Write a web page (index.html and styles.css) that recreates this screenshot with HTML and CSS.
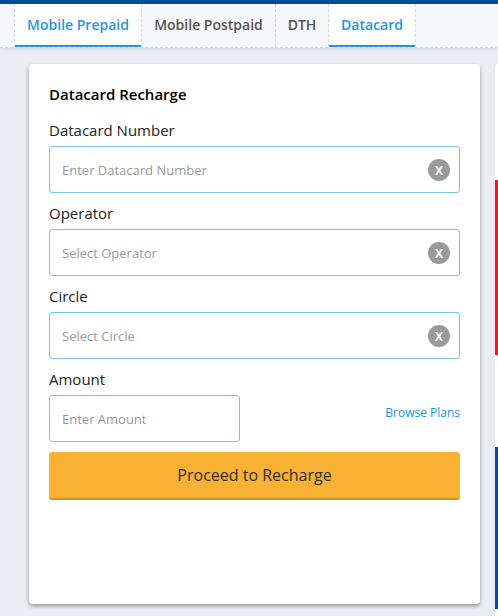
FILE: index.html
```html
<!DOCTYPE html>
<html lang="en">
<head>
<meta charset="utf-8">
<title>Datacard Recharge</title>
<link rel="stylesheet" href="styles.css">
</head>
<body>
<nav class="tabs">
  <a class="tab tab-prepaid active"><span>Mobile Prepaid</span></a>
  <a class="tab tab-postpaid"><span>Mobile Postpaid</span></a>
  <a class="tab tab-dth"><span>DTH</span></a>
  <a class="tab tab-datacard active"><span>Datacard</span></a>
</nav>
<main class="content">
  <form class="card">
    <h1>Datacard Recharge</h1>
    <label><span>Datacard Number</span></label>
    <div class="field"><span class="placeholder">Enter Datacard Number</span><span class="clear">X</span></div>
    <label><span>Operator</span></label>
    <div class="field"><span class="placeholder">Select Operator</span><span class="clear">X</span></div>
    <label><span>Circle</span></label>
    <div class="field"><span class="placeholder">Select Circle</span><span class="clear">X</span></div>
    <label><span>Amount</span></label>
    <div class="amount-row">
      <div class="field field-amount"><span class="placeholder">Enter Amount</span></div>
      <a class="plans">Browse Plans</a>
    </div>
    <button class="submit" type="button">Proceed to Recharge</button>
  </form>
  <aside class="promos">
    <div class="promo-red"></div>
    <div class="promo-blue"></div>
  </aside>
</main>
</body>
</html>
```

FILE: styles.css
```css
* { box-sizing: border-box; }
html { overflow: hidden; }
body {
  margin: 0;
  height: 616px;
  overflow: hidden;
  background: #eaeef3;
  border-top: 4px solid #004c9b;
  font-family: "Open Sans", sans-serif;
  color: #222;
}
.tabs {
  display: flex;
  height: 44px;
  padding-left: 14px;
  background: #f5f7f9;
  border-bottom: 1px dashed #d5d8db;
  box-shadow: 0 1px 4px rgba(0, 0, 0, .1);
}
.tab {
  display: flex;
  justify-content: center;
  height: 43px;
  border-right: 1px dashed #d5d8db;
  font-size: 14px;
  font-weight: 600;
  line-height: 42px;
  white-space: nowrap;
  color: #555;
}
.tab-prepaid { width: 128px; border-left: 1px dashed #d5d8db; }
.tab-postpaid { width: 134px; }
.tab-dth { width: 53px; }
.tab-datacard { width: 87px; }
.tab.active {
  background: linear-gradient(#119bed, #119bed) bottom / 100% 2px no-repeat #fff;
  color: #1b96e8;
}
.content {
  display: flex;
  justify-content: space-between;
  padding: 16px 0 0 29px;
}
.card {
  width: 451px;
  height: 540px;
  padding: 20px;
  background: #fff;
  border-radius: 4px;
  box-shadow: 0 2px 4px rgba(0, 0, 0, .4);
}
h1 {
  margin: 0 0 12px;
  font-size: 15px;
  font-weight: 600;
  line-height: 20px;
  color: #000;
}
label {
  display: block;
  height: 30px;
  font-size: 15px;
  line-height: 28px;
  color: #222;
}
.field + label { margin-top: 6px; }
.field {
  display: flex;
  align-items: center;
  justify-content: space-between;
  height: 47px;
  padding: 0 9px 0 12px;
  background: #fff;
  border: 1px solid #7bc4ed;
  border-radius: 3px;
  box-shadow: inset 0 1px 2px rgba(0, 0, 0, .06);
}
.placeholder { font-size: 13px; color: #999; }
.clear {
  width: 22px;
  height: 22px;
  border-radius: 50%;
  background: #979b9b;
  color: #fff;
  font-size: 12px;
  font-weight: 700;
  line-height: 23px;
  text-align: center;
}
.amount-row { display: flex; justify-content: space-between; }
.field-amount { width: 191px; }
.plans {
  padding-top: 9px;
  font-size: 12px;
  line-height: 17px;
  color: #1594e5;
}
.submit {
  display: block;
  width: 100%;
  height: 48px;
  margin: 10px 0 0;
  padding: 0;
  border: 0;
  border-bottom: 2px solid #d69218;
  border-radius: 3px;
  background: #f8b133;
  font: 16px/46px "Open Sans", sans-serif;
  color: #332f28;
}
.promos {
  width: 3px;
  height: 552px;
  padding-top: 116px;
  background: #fff;
  border-top-left-radius: 3px;
}
.promo-red { height: 175px; background: #ed1c24; }
.promo-blue { height: 162px; margin-top: 92px; background: #0d4a96; }
```
